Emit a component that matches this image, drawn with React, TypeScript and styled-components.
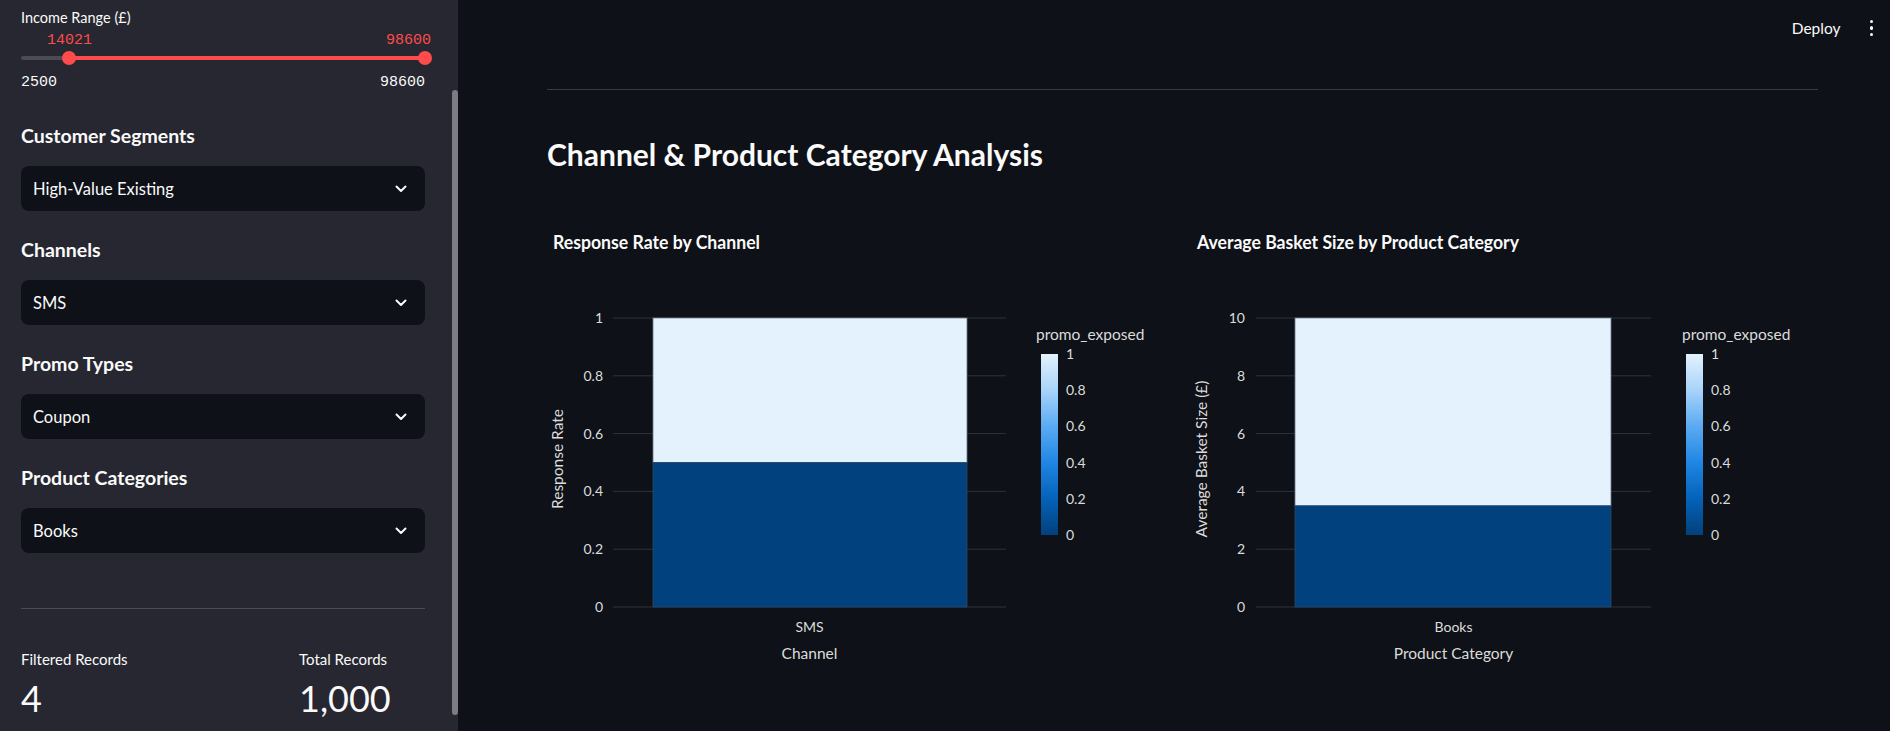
import React from "react";
import styled, { createGlobalStyle } from "styled-components";

const GlobalStyle = createGlobalStyle`
  html, body { margin: 0; padding: 0; background: #0e1117; }
  body { font-family: Lato, "Noto Sans", sans-serif; color: #fafafa; }
  * { box-sizing: border-box; }
`;

const Shell = styled.div`
  display: flex;
  width: 100%;
  height: 731px;
  overflow: hidden;
`;

const Sidebar = styled.aside`
  position: relative;
  flex: 0 0 458px;
  height: 100%;
  background: #262730;
  padding: 8px 33px 0 21px;
  display: flex;
  flex-direction: column;
`;

const ScrollThumb = styled.div`
  position: absolute;
  right: 0;
  top: 90px;
  width: 6px;
  height: 625px;
  border-radius: 3px;
  background: #7b7c84;
`;

const SliderLabel = styled.div`
  font-size: 14.5px;
  line-height: 20px;
  height: 20px;
  color: #fafafa;
`;

const SliderBody = styled.div`
  position: relative;
  padding-top: 28px;
`;

const Track = styled.div`
  position: relative;
  height: 4px;
  border-radius: 2px;
  background: #4a4b55;
`;

const Fill = styled.div`
  position: absolute;
  top: 0;
  bottom: 0;
  background: #ff4b4b;
`;

const Thumb = styled.div`
  position: absolute;
  top: 50%;
  width: 14px;
  height: 14px;
  border-radius: 50%;
  background: #ff4b4b;
  transform: translate(-50%, -50%);
`;

const ThumbValue = styled.div<{ $align: "center" | "right" }>`
  position: absolute;
  bottom: 9px;
  font-family: "Liberation Mono", "DejaVu Sans Mono", monospace;
  font-size: 15px;
  line-height: 20px;
  color: #ff4b4b;
  white-space: nowrap;
  transform: ${(p) => (p.$align === "center" ? "translateX(-50%)" : "translateX(-100%) translateX(6px)")};
`;

const MinMaxRow = styled.div`
  display: flex;
  justify-content: space-between;
  margin-top: 13px;
  font-family: "Liberation Mono", "DejaVu Sans Mono", monospace;
  font-size: 15px;
  line-height: 20px;
  color: #fafafa;
`;

const Section = styled.section`
  display: flex;
  flex-direction: column;
`;

const SectionHeading = styled.h3<{ $first?: boolean }>`
  margin: ${(p) => (p.$first ? "29px" : "25px")} 0 0 0;
  font-size: 19.5px;
  line-height: 28px;
  font-weight: 700;
  color: #fafafa;
`;

const Select = styled.div`
  margin-top: 16px;
  height: 45px;
  border-radius: 8px;
  background: #0e1117;
  display: flex;
  align-items: center;
  justify-content: space-between;
  padding: 0 18px 0 12px;
  font-size: 16.5px;
  color: #fafafa;
`;

const Divider = styled.hr`
  margin: 55px 0 0 0;
  border: none;
  height: 1px;
  background: #4a4b55;
`;

const Metrics = styled.div`
  display: grid;
  grid-template-columns: 278px 1fr;
  margin-top: 40px;
`;

const Metric = styled.div`
  display: flex;
  flex-direction: column;
  gap: 5px;
`;

const MetricLabel = styled.div`
  font-size: 15px;
  line-height: 20px;
  color: #fafafa;
`;

const MetricValue = styled.div`
  font-size: 36px;
  line-height: 48px;
  font-weight: 400;
  color: #fafafa;
`;

const Main = styled.main`
  flex: 1;
  display: flex;
  flex-direction: column;
`;

const Header = styled.header`
  height: 56px;
  display: flex;
  align-items: center;
  justify-content: flex-end;
  gap: 29px;
  padding-right: 17px;
`;

const DeployButton = styled.span`
  font-size: 15.5px;
  color: #fafafa;
`;

const Kebab = styled.span`
  display: flex;
  flex-direction: column;
  gap: 3px;
  & > i {
    display: block;
    width: 3.5px;
    height: 3.5px;
    border-radius: 50%;
    background: #fafafa;
  }
`;

const Content = styled.div`
  padding: 0 72px 0 89px;
  display: flex;
  flex-direction: column;
`;

const Rule = styled.hr`
  margin: 33px 0 0 0;
  border: none;
  height: 1px;
  background: #3a3c44;
`;

const Title = styled.h2`
  margin: 42px 0 0 0;
  font-size: 30px;
  line-height: 44px;
  font-weight: 700;
  color: #fafafa;
`;

const ChartsRow = styled.div`
  margin-top: 39px;
  display: grid;
  grid-template-columns: 627px 627px;
  justify-content: space-between;
`;

const ChartSvg = styled.svg`
  display: block;
  font-family: Lato, "Noto Sans", sans-serif;
`;

const Chevron = () => (
  <svg width="12" height="8" viewBox="0 0 12 8">
    <path d="M1.5 1.5 L6 6 L10.5 1.5" fill="none" stroke="#fafafa" strokeWidth="2" strokeLinecap="round" strokeLinejoin="round" />
  </svg>
);

type ChartProps = {
  id: string;
  title: string;
  titleWidth: number;
  gridX0: number;
  gridX1: number;
  barX0: number;
  barX1: number;
  yMax: number;
  ticks: string[];
  tickX: number;
  darkValue: number;
  yTitle: string;
  yTitleX: number;
  xTick: string;
  xTitle: string;
  cbX: number;
  cbTitleX: number;
};

const Y0 = 392;
const YH = 289;

const Chart: React.FC<ChartProps> = (p) => {
  const y = (v: number) => Y0 - (v / p.yMax) * YH;
  const cx = (p.gridX0 + p.gridX1) / 2;
  const cbTop = 139;
  const cbBot = 320;
  const cbTicks = ["1", "0.8", "0.6", "0.4", "0.2", "0"];
  return (
    <ChartSvg width="627" height="470" viewBox="0 0 627 470">
      <defs>
        <linearGradient id={p.id} x1="0" y1="1" x2="0" y2="0">
          <stop offset="0" stopColor="#03407c" />
          <stop offset="0.2" stopColor="#0462b8" />
          <stop offset="0.4" stopColor="#1f86e3" />
          <stop offset="0.6" stopColor="#5aaaf2" />
          <stop offset="0.8" stopColor="#a8d3fa" />
          <stop offset="1" stopColor="#e3f2fd" />
        </linearGradient>
      </defs>
      <text x="6" y="27" dy="0.35em" fontSize="19" fontWeight="700" fill="#fafafa" textLength={p.titleWidth} lengthAdjust="spacingAndGlyphs">
        {p.title}
      </text>
      {p.ticks.map((t, i) => {
        const v = (p.yMax * (p.ticks.length - 1 - i)) / (p.ticks.length - 1);
        const yy = y(v);
        return (
          <g key={t}>
            <line x1={p.gridX0} x2={p.gridX1} y1={yy} y2={yy} stroke="#2f323a" strokeWidth="1" />
            <text x={p.tickX} y={yy} dy="0.35em" textAnchor="end" fontSize="14" fill="#dcdcdc">
              {t}
            </text>
          </g>
        );
      })}
      <rect x={p.barX0} y={y(p.yMax)} width={p.barX1 - p.barX0} height={y(p.darkValue) - y(p.yMax)} fill="#e3f2fd" stroke="#6b7785" strokeWidth="0.8" />
      <rect x={p.barX0} y={y(p.darkValue)} width={p.barX1 - p.barX0} height={Y0 - y(p.darkValue)} fill="#01427e" stroke="#2a4a6a" strokeWidth="0.8" />
      <text x={p.yTitleX} y="244" dy="0.35em" fontSize="15.5" fill="#dcdcdc" textAnchor="middle" transform={`rotate(-90 ${p.yTitleX} 244)`}>
        {p.yTitle}
      </text>
      <text x={cx} y="412" dy="0.35em" fontSize="14" fill="#dcdcdc" textAnchor="middle">
        {p.xTick}
      </text>
      <text x={cx} y="439" dy="0.35em" fontSize="15.5" fill="#dcdcdc" textAnchor="middle">
        {p.xTitle}
      </text>
      <text x={p.cbTitleX} y="120" dy="0.35em" fontSize="15.5" fill="#dcdcdc">
        promo_exposed
      </text>
      <rect x={p.cbX} y={cbTop} width="17" height={cbBot - cbTop} fill={`url(#${p.id})`} />
      {cbTicks.map((t, i) => (
        <text key={t} x={p.cbX + 25} y={cbTop + ((cbBot - cbTop) * i) / 5} dy="0.35em" fontSize="14" fill="#dcdcdc">
          {t}
        </text>
      ))}
    </ChartSvg>
  );
};

const filters = [
  { heading: "Customer Segments", value: "High-Value Existing" },
  { heading: "Channels", value: "SMS" },
  { heading: "Promo Types", value: "Coupon" },
  { heading: "Product Categories", value: "Books" },
];

const MIN = 2500;
const MAX = 98600;
const LOW = 14021;
const HIGH = 98600;

export default function App() {
  const lowPct = ((LOW - MIN) / (MAX - MIN)) * 100;
  const highPct = ((HIGH - MIN) / (MAX - MIN)) * 100;
  return (
    <>
      <GlobalStyle />
      <Shell>
        <Sidebar>
          <SliderLabel>Income Range (£)</SliderLabel>
          <SliderBody>
            <Track>
              <Fill style={{ left: `${lowPct}%`, right: `${100 - highPct}%` }} />
              <Thumb style={{ left: `${lowPct}%` }} />
              <Thumb style={{ left: `${highPct}%` }} />
              <ThumbValue $align="center" style={{ left: `${lowPct}%` }}>{LOW}</ThumbValue>
              <ThumbValue $align="right" style={{ left: `${highPct}%` }}>{HIGH}</ThumbValue>
            </Track>
            <MinMaxRow>
              <span>{MIN}</span>
              <span>{MAX}</span>
            </MinMaxRow>
          </SliderBody>
          {filters.map((f, i) => (
            <Section key={f.heading}>
              <SectionHeading $first={i === 0}>{f.heading}</SectionHeading>
              <Select>
                <span>{f.value}</span>
                <Chevron />
              </Select>
            </Section>
          ))}
          <Divider />
          <Metrics>
            <Metric>
              <MetricLabel>Filtered Records</MetricLabel>
              <MetricValue>4</MetricValue>
            </Metric>
            <Metric>
              <MetricLabel>Total Records</MetricLabel>
              <MetricValue>1,000</MetricValue>
            </Metric>
          </Metrics>
          <ScrollThumb />
        </Sidebar>
        <Main>
          <Header>
            <DeployButton>Deploy</DeployButton>
            <Kebab>
              <i />
              <i />
              <i />
            </Kebab>
          </Header>
          <Content>
            <Rule />
            <Title>Channel &amp; Product Category Analysis</Title>
            <ChartsRow>
              <Chart
                id="cbLeft"
                title="Response Rate by Channel"
                titleWidth={207}
                gridX0={66}
                gridX1={459}
                barX0={106}
                barX1={420}
                yMax={1}
                ticks={["1", "0.8", "0.6", "0.4", "0.2", "0"]}
                tickX={56}
                darkValue={0.5}
                yTitle="Response Rate"
                yTitleX={11}
                xTick="SMS"
                xTitle="Channel"
                cbX={494}
                cbTitleX={489}
              />
              <Chart
                id="cbRight"
                title="Average Basket Size by Product Category"
                titleWidth={322}
                gridX0={65}
                gridX1={460}
                barX0={104}
                barX1={420}
                yMax={10}
                ticks={["10", "8", "6", "4", "2", "0"]}
                tickX={54}
                darkValue={3.5}
                yTitle="Average Basket Size (£)"
                yTitleX={11}
                xTick="Books"
                xTitle="Product Category"
                cbX={495}
                cbTitleX={491}
              />
            </ChartsRow>
          </Content>
        </Main>
      </Shell>
    </>
  );
}
